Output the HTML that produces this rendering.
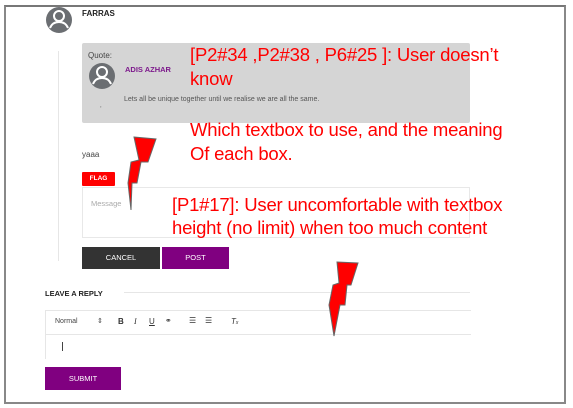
<!DOCTYPE html>
<html><head><style>
*{margin:0;padding:0;box-sizing:border-box}
body{width:573px;height:408px;background:#fff;position:relative;overflow:hidden;font-family:"Liberation Sans",sans-serif}
.a{position:absolute}
.red{color:#f00;font-size:18.5px;line-height:23px;white-space:nowrap;font-family:"Liberation Sans",sans-serif;letter-spacing:-0.2px}
</style></head><body>
<div class="a" style="left:4px;top:5px;width:562px;height:399px;border:2px solid #888;border-top-color:#777"></div>

<svg class="a" style="left:45px;top:6px" width="28" height="28" viewBox="0 0 28 28"><circle cx="14" cy="14" r="13" fill="#6b6e72"/><circle cx="14" cy="10" r="5" fill="none" stroke="#fff" stroke-width="2"/><path d="M5 22c2-5 6-6 9-6s7 1 9 6" fill="none" stroke="#fff" stroke-width="2"/></svg>
<div class="a" style="left:82px;top:9px;font-size:8px;font-weight:bold;color:#222">FARRAS</div>

<div class="a" style="left:58px;top:51px;width:1px;height:210px;background:#e6e6e6"></div>

<div class="a" style="left:82px;top:43px;width:388px;height:80px;background:#d5d5d5;border-radius:2px"></div>
<div class="a" style="left:88px;top:51px;font-size:8px;color:#444">Quote:</div>
<svg class="a" style="left:88px;top:62px" width="28" height="28" viewBox="0 0 28 28"><circle cx="14" cy="14" r="13" fill="#6b6e72"/><circle cx="14" cy="10" r="5" fill="none" stroke="#fff" stroke-width="2"/><path d="M5 22c2-5 6-6 9-6s7 1 9 6" fill="none" stroke="#fff" stroke-width="2"/></svg>
<div class="a" style="left:125px;top:65px;font-size:7.5px;font-weight:bold;color:#7d1a8c">ADIS AZHAR</div>
<div class="a" style="left:124px;top:96px;font-size:7px;color:#555">Lets all be unique together until we realise we are all the same.</div>
<div class="a" style="left:100px;top:103px;font-size:6px;color:#555">,</div>

<div class="a" style="left:82px;top:150px;font-size:8px;color:#444">yaaa</div>
<div class="a" style="left:82px;top:172px;width:33px;height:14px;background:#f00;color:#fff;font-size:6.5px;font-weight:bold;text-align:center;line-height:14px;border-radius:1px">FLAG</div>
<div class="a" style="left:82px;top:187px;width:388px;height:51px;border:1px solid #e8e8e8"></div>
<div class="a" style="left:91px;top:199px;font-size:7.5px;color:#aaa">Message</div>
<div class="a" style="left:82px;top:247px;width:78px;height:22px;background:#333;color:#fff;font-size:7.5px;text-align:center;line-height:22px">CANCEL</div>
<div class="a" style="left:162px;top:247px;width:67px;height:22px;background:#800080;color:#fff;font-size:7.5px;text-align:center;line-height:22px">POST</div>

<div class="a" style="left:45px;top:289px;font-size:7.5px;font-weight:bold;color:#222">LEAVE A REPLY</div>
<div class="a" style="left:124px;top:292px;width:346px;height:1px;background:#e6e6e6"></div>
<div class="a" style="left:45px;top:310px;width:426px;height:49px;border:1px solid #e6e6e6;border-right:none;border-bottom:none"></div>
<div class="a" style="left:45px;top:334px;width:426px;height:1px;background:#e6e6e6"></div>
<div class="a" style="left:55px;top:318px;font-size:7px;color:#444">Normal</div>
<div class="a" style="left:97px;top:317px;font-size:7px;color:#444">⇕</div>
<div class="a" style="left:118px;top:317px;font-size:8px;font-weight:bold;color:#333">B</div>
<div class="a" style="left:134px;top:317px;font-size:8px;font-style:italic;color:#333;font-family:'Liberation Serif',serif">I</div>
<div class="a" style="left:149px;top:317px;font-size:8px;text-decoration:underline;color:#333">U</div>
<div class="a" style="left:165px;top:316px;font-size:8px;color:#333">⚭</div>
<div class="a" style="left:189px;top:316px;font-size:8px;color:#333">☰</div>
<div class="a" style="left:205px;top:316px;font-size:8px;color:#333">☰</div>
<div class="a" style="left:231px;top:317px;font-size:8px;font-style:italic;color:#333">T<span style="font-size:5px">x</span></div>
<div class="a" style="left:62px;top:342px;width:1px;height:9px;background:#444"></div>
<div class="a" style="left:45px;top:367px;width:76px;height:23px;background:#800080;color:#fff;font-size:7.5px;text-align:center;line-height:23px">SUBMIT</div>

<div class="a red" style="left:190px;top:43px">[P2#34 ,P2#38 , P6#25 ]: User doesn’t</div>
<div class="a red" style="left:190px;top:67px">know</div>
<div class="a red" style="left:190px;top:118px">Which textbox to use, and the meaning</div>
<div class="a red" style="left:190px;top:142px">Of each box.</div>
<div class="a red" style="left:172px;top:193px">[P1#17]: User uncomfortable with textbox</div>
<div class="a red" style="left:172px;top:216px">height (no limit) when too much content</div>

<svg class="a" style="left:0;top:0" width="573" height="408">
<path d="M134 137L156 139L148 162L141 162L137 183L132 183L131 210L128 183L131 162L139 160Z" fill="#f00" stroke="#666" stroke-width="1"/>
<path d="M337 262L358 263L351 285L347 285L345 305L340 305L334 336L329 305L333 285L339 283Z" fill="#f00" stroke="#666" stroke-width="1"/>
</svg>
</body></html>
